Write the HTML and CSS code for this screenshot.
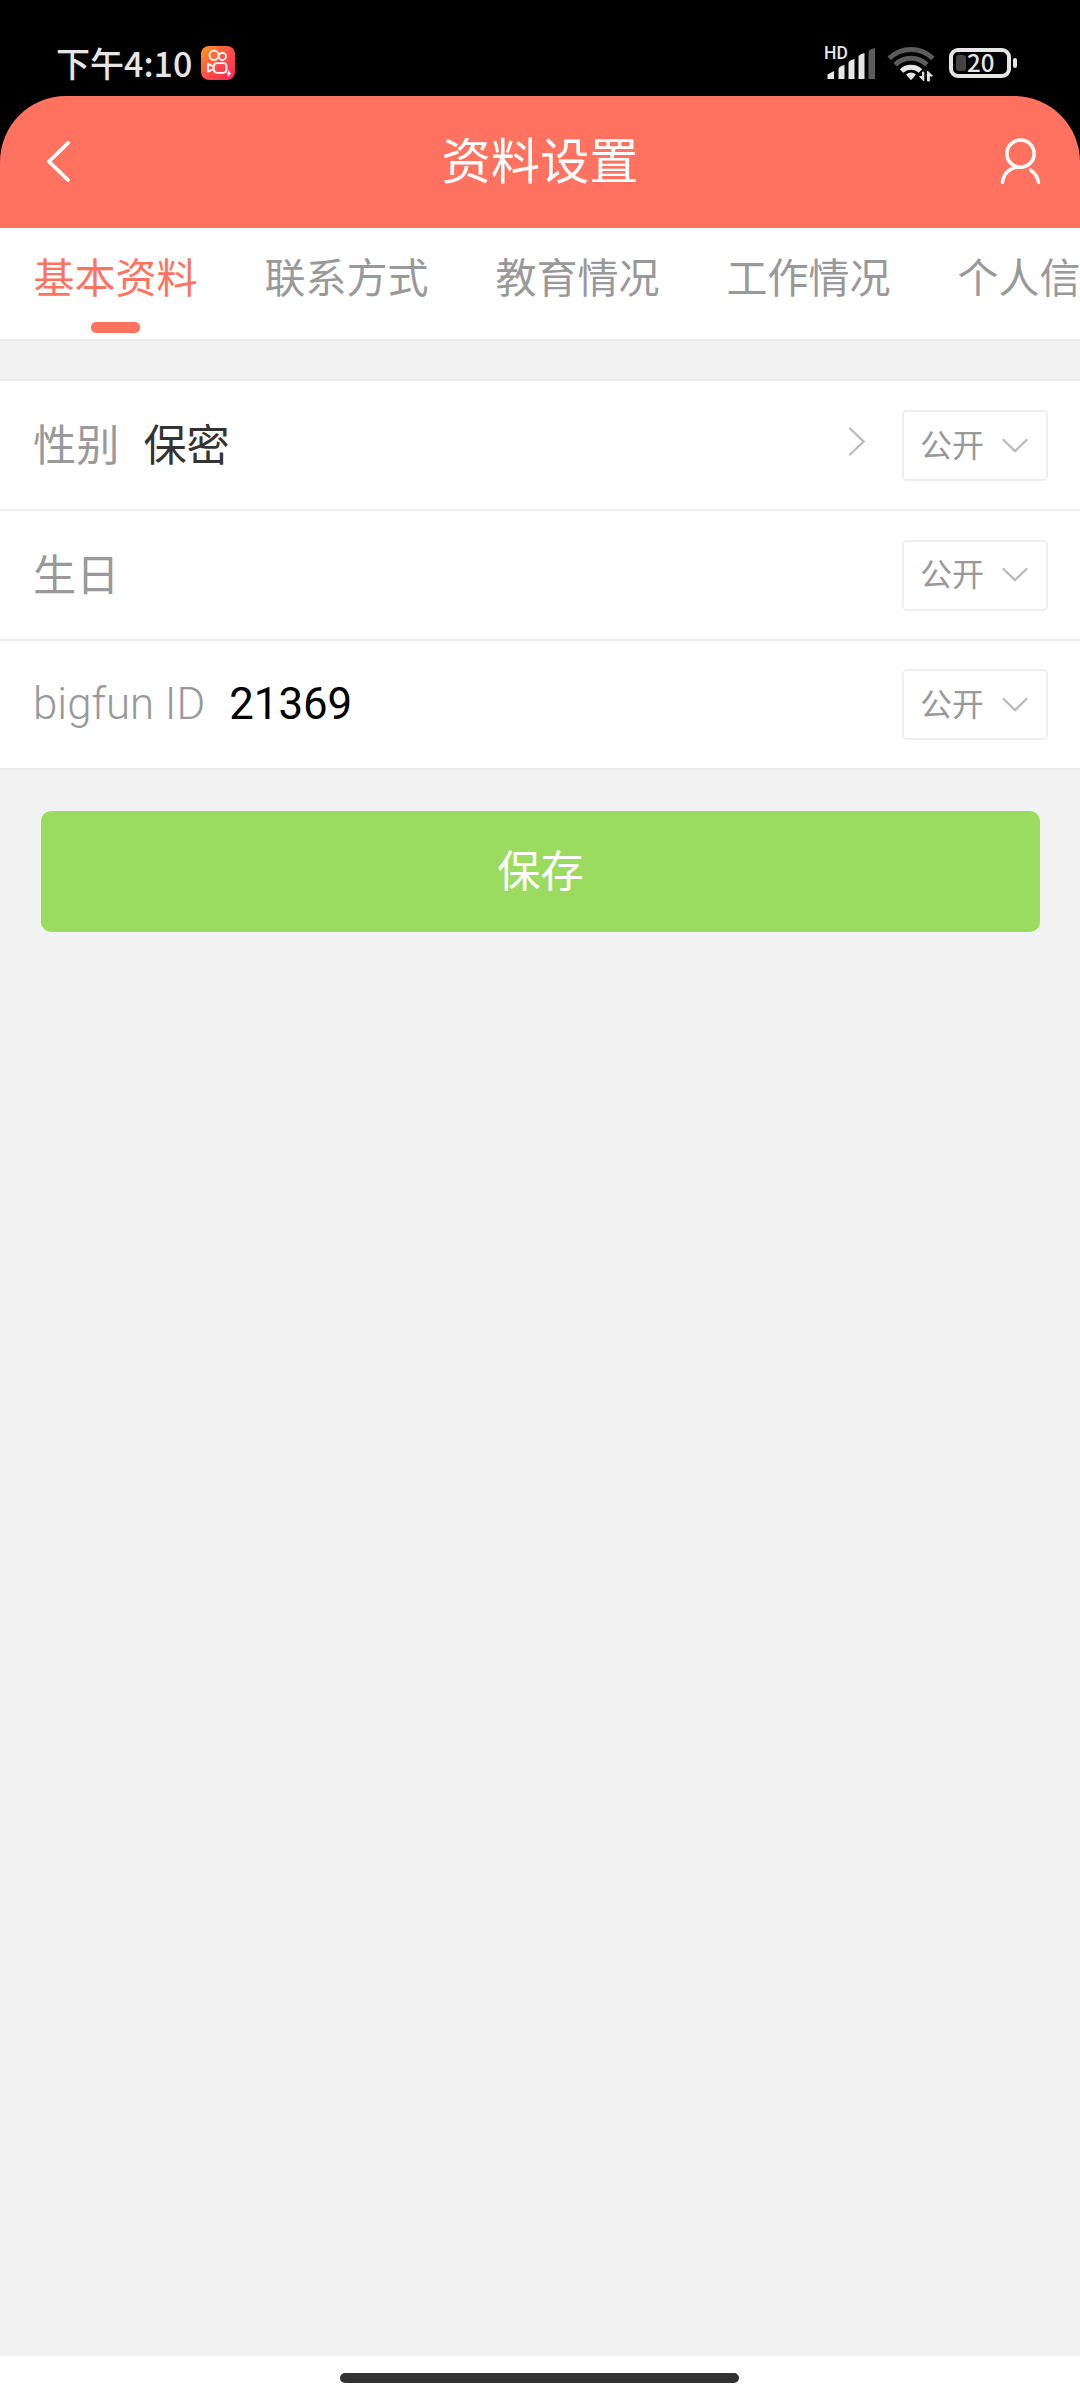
FILE: index.html
```
<!DOCTYPE html>
<html lang="zh-CN">
<head>
  <meta charset="UTF-8">
  <meta name="viewport" content="width=device-width, initial-scale=1.0">
  <title>资料设置</title>
  <link rel="stylesheet" href="styles.css">
</head>
<body>

<div class="status-bar">
  <div class="status-left">
    <span class="time">下午4:10</span>
    <svg class="app-icon" width="34" height="34" viewBox="0 0 34 34">
      <defs>
        <linearGradient id="app-bg" x1="0" y1="0" x2="1" y2="1">
          <stop offset="0" stop-color="#ff9a1f"/>
          <stop offset="0.5" stop-color="#ff5048"/>
          <stop offset="1" stop-color="#ff2257"/>
        </linearGradient>
      </defs>
      <rect width="34" height="34" rx="8" fill="url(#app-bg)"/>
      <g fill="none" stroke="#fff" stroke-width="1.8" stroke-linejoin="round">
        <circle cx="13" cy="9.3" r="4.6"/>
        <circle cx="21.4" cy="10.4" r="3.6"/>
        <rect x="12.9" y="17.2" width="12.6" height="9.6" rx="3.2"/>
        <path d="M12.6 20.6L7 17.9V25.6L12.6 23.2"/>
      </g>
      <path d="M28 24.5L26 28H28L27.3 30.5L30 27H28Z" fill="#fff" stroke="#fff" stroke-width="0.6"/>
    </svg>
  </div>
  <div class="status-right">
    <div class="signal">
      <span class="hd">HD</span>
      <svg width="50" height="34" viewBox="0 0 50 34">
        <g fill="#e6e6e6">
          <path d="M2.5 33V28.5L9 25V33Z"/>
          <path d="M13.5 33V23Q13.5 20.5 19.5 19V33Z"/>
          <path d="M23.5 33V17Q23.5 14.5 29.5 13V33Z"/>
          <path d="M33.5 33V11Q33.5 8.5 39.5 7V33Z"/>
        </g>
        <path d="M43.5 33V6Q43.5 3.5 50 2V33Z" fill="#5c5c5c"/>
      </svg>
    </div>
    <svg class="wifi" width="48" height="36" viewBox="0 0 48 36">
      <g fill="none" stroke-width="5">
        <path d="M2.2 12.4A31 31 0 0 1 45.8 12.4" stroke="#5c5c5c"/>
        <path d="M8.2 18.7A22.5 22.5 0 0 1 39.8 18.7" stroke="#5c5c5c"/>
        <path d="M14.5 25A13.8 13.8 0 0 1 33.5 25" stroke="#e6e6e6"/>
      </g>
      <path d="M19 28.5Q24 24.5 29 28.5L24.7 33.5Q24 34.3 23.3 33.5Z" fill="#e6e6e6"/>
      <path d="M36.800 26V35L32.500 30.500H35.500V26ZM40.500 35V25L45.500 30H42.300V35Z" fill="#e6e6e6" stroke="#e6e6e6" stroke-width="1"/>
    </svg>
    <div class="battery">
      <div class="battery-body">
        <span class="battery-level"></span>
        <span class="battery-text">20</span>
      </div>
      <span class="battery-tip"></span>
    </div>
  </div>
</div>

<div class="header">
  <svg width="28" height="46" viewBox="0 0 28 46">
    <path d="M22 4L3 22.500L22 41" fill="none" stroke="#fff" stroke-width="3.800" stroke-linecap="round" stroke-linejoin="round"/>
  </svg>
  <h1>资料设置</h1>
  <svg width="44" height="50" viewBox="0 0 44 50">
    <g fill="none" stroke="#fff" stroke-width="3.5" stroke-linecap="round">
      <circle cx="22.5" cy="16.7" r="13.6"/>
      <path d="M4.5 45.3C5.5 36.5 12 30.4 21 30.3"/>
      <path d="M32.7 33.2C37 36.3 39.8 40.5 40.5 45.3"/>
    </g>
  </svg>
</div>

<div class="tabs">
  <div class="tab active">基本资料</div>
  <div class="tab">联系方式</div>
  <div class="tab">教育情况</div>
  <div class="tab">工作情况</div>
  <div class="tab">个人信息</div>
</div>

<div class="list">
  <div class="row">
    <span class="label">性别</span>
    <span class="value">保密</span>
    <svg class="arrow" width="18" height="32" viewBox="0 0 18 32">
      <path d="M2 2.5L15.5 15.5L2 28.5"/>
    </svg>
    <div class="select">
      <span>公开</span>
      <svg width="26" height="16" viewBox="0 0 26 16"><path d="M1.5 2L13 13L24.5 2"/></svg>
    </div>
  </div>
  <div class="row">
    <span class="label">生日</span>
    <div class="select">
      <span>公开</span>
      <svg width="26" height="16" viewBox="0 0 26 16"><path d="M1.5 2L13 13L24.5 2"/></svg>
    </div>
  </div>
  <div class="row row-id">
    <span class="label">bigfun ID</span>
    <span class="value">21369</span>
    <div class="select">
      <span>公开</span>
      <svg width="26" height="16" viewBox="0 0 26 16"><path d="M1.5 2L13 13L24.5 2"/></svg>
    </div>
  </div>
</div>

<button class="save">保存</button>

<div class="home-bar"><span></span></div>

</body>
</html>
```

FILE: styles.css
```
* {
  box-sizing: border-box;
}

body {
  margin: 0;
  height: 2400px;
  display: flex;
  flex-direction: column;
  overflow: hidden;
  background: linear-gradient(#000 228px, #f2f2f2 228px);
  font-family: Roboto, "Noto Sans CJK SC", sans-serif;
}

svg {
  display: block;
  flex: none;
}

/* Status bar */
.status-bar {
  height: 96px;
  flex: none;
  padding: 46px 63px 0 56px;
  display: flex;
  justify-content: space-between;
  color: #e6e6e6;
  font-family: "Noto Sans CJK SC", sans-serif;
  font-weight: 500;
}

.status-left,
.status-right {
  display: flex;
  height: 34px;
}

.time {
  width: 145px;
  font-size: 34px;
  line-height: 34px;
  white-space: nowrap;
}

.signal {
  position: relative;
  width: 50px;
}

.hd {
  position: absolute;
  left: -1px;
  top: 0;
  font-family: Roboto, sans-serif;
  font-size: 17.5px;
  line-height: 14px;
}

.wifi {
  margin-left: 12px;
}

.battery {
  display: flex;
  align-items: center;
  gap: 2px;
  height: 30px;
  margin: 2px 0 0 14px;
}

.battery-body {
  width: 62px;
  height: 30px;
  border: 4px solid #e6e6e6;
  border-radius: 9px;
  padding-left: 3px;
  display: flex;
  align-items: center;
  gap: 1px;
}

.battery-level {
  width: 10px;
  height: 16px;
  border-radius: 3px;
  background: #444;
}

.battery-text {
  font-size: 24px;
  line-height: 20px;
  padding-bottom: 2px;
}

.battery-tip {
  width: 4px;
  height: 10px;
  border-radius: 2px;
  background: #e6e6e6;
}

/* Header */
.header {
  height: 132px;
  flex: none;
  padding: 0 38px 0 46px;
  display: flex;
  align-items: center;
  justify-content: space-between;
  background: #ff7260;
  border-radius: 66px 66px 0 0;
  color: #fff;
}

.header h1 {
  margin: 0 0 0 8px;
  font-size: 49.3px;
  font-weight: 400;
  line-height: 132px;
}

/* Tabs */
.tabs {
  height: 113px;
  flex: none;
  display: flex;
  overflow: hidden;
  background: #fff;
  border-bottom: 2px solid #eee;
}

.tab {
  flex: none;
  width: 231px;
  display: flex;
  flex-direction: column;
  align-items: center;
  font-size: 41px;
  line-height: 102px;
  color: #999;
}

.tab.active {
  color: #ff7260;
}

.tab.active::after {
  content: "";
  width: 49px;
  height: 11px;
  margin-top: -8px;
  border-radius: 5px;
  background: #ff7260;
}

/* Form rows */
.list {
  margin-top: 38px;
  flex: none;
  background: #fff;
  border-top: 2px solid #eee;
}

.row {
  height: 130px;
  display: flex;
  align-items: center;
  padding: 0 32px 0 33px;
  border-bottom: 2px solid #eee;
  font-size: 43.2px;
}

.row:first-child {
  padding-top: 1px;
}

.row:last-child {
  height: 129px;
}

.label,
.value {
  padding-bottom: 7px;
}

.label {
  color: #999;
}

.value {
  margin-left: 24px;
  color: #333;
}

.row-id {
  font-size: 43.8px;
}

.row-id .label {
  font-weight: 300;
  padding-bottom: 2px;
}

.row-id .value {
  color: #000;
  padding-bottom: 2px;
}

.arrow {
  margin: -8px 36px 0 auto;
}

.row path {
  fill: none;
  stroke: #bbb;
  stroke-width: 2.4;
  stroke-linecap: round;
}

.select {
  width: 146px;
  height: 71px;
  margin-left: auto;
  padding: 0 18px 0 16px;
  display: flex;
  align-items: center;
  justify-content: space-between;
  border: 2px solid #eee;
  border-radius: 5px;
  font-size: 32px;
  color: #999;
}

.select span {
  padding-bottom: 6px;
}

.arrow + .select {
  margin-left: 0;
}

.save {
  width: 999px;
  height: 121px;
  flex: none;
  margin: 41px 0 0 41px;
  padding: 0 0 8px;
  border: none;
  border-radius: 10px;
  background: #9bdc60;
  color: #fff;
  font-family: inherit;
  font-size: 43.2px;
}

/* Gesture bar */
.home-bar {
  height: 44px;
  flex: none;
  margin-top: auto;
  padding-top: 17px;
  background: #fff;
}

.home-bar span {
  display: block;
  width: 399px;
  height: 10px;
  margin-left: 340px;
  border-radius: 5px;
  background: #323232;
}
```
